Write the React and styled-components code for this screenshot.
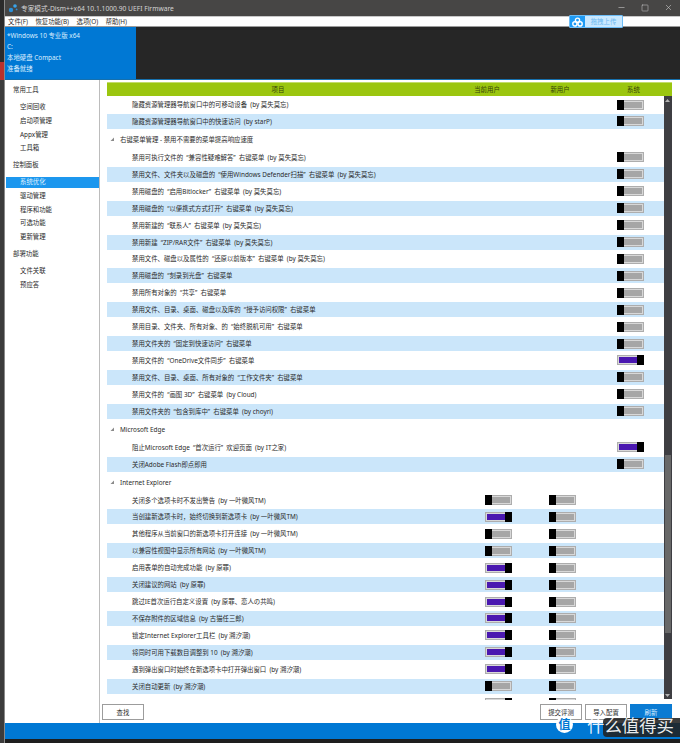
import React from 'react'
import styled, { createGlobalStyle } from 'styled-components'
import { Minus, Square, X } from 'lucide-react'

const GlobalStyle = createGlobalStyle`
  html, body {
    margin: 0;
    padding: 0;
    background: #1e1e1e;
  }
  * {
    box-sizing: border-box;
  }
`

const Page = styled.div`
  position: relative;
  display: flex;
  width: 680px;
  height: 743px;
  overflow: hidden;
  font-family: "Noto Sans", "Noto Sans CJK SC", sans-serif;
  font-size: 6.4px;
  color: #2a2a2a;
`

const Strip = styled.div`
  width: 4px;
  background: linear-gradient(#2b2b2b 0 62px, #b8312c 62px 80px, #3c3c3c 80px);
`

const Window = styled.div`
  flex: 1;
  display: flex;
  flex-direction: column;
  min-width: 0;
  border-left: 1px solid #8a8a8a;
`

const TitleBar = styled.div`
  height: 17px;
  display: flex;
  align-items: center;
  gap: 3px;
  padding: 0 7px 1px 3px;
  background: #474645;
  border-bottom: 1px solid #c8c8c8;
  color: #d4d4d4;
  font-size: 6.7px;
`

const TitleText = styled.span`
  flex: 1;
`

const WindowControls = styled.div`
  display: flex;
  align-items: center;
  gap: 15px;
  color: #d0d0d0;
`

const MenuBar = styled.div`
  height: 10px;
  display: flex;
  align-items: center;
  gap: 7.5px;
  padding-left: 3px;
  background: #fff;
  border-bottom: 1px solid #9a9a9a;
  line-height: 9px;
`

const TopPanel = styled.div`
  height: 53px;
  display: flex;
  background: #262626;
  border-bottom: 1px solid #1670ad;
`

const InfoBox = styled.div`
  width: 131px;
  padding: 2.5px 2px;
  background: #0078d4;
  color: #dbeeff;
  line-height: 11px;
`

const Body = styled.div`
  flex: 1;
  display: flex;
  min-height: 0;
  background: #fff;
`

const Sidebar = styled.div`
  width: 95px;
  border-right: 1px solid #bcbcbc;
`

const GroupTitle = styled.div`
  height: 13.7px;
  margin: 3.3px 0;
  padding-left: 8px;
  line-height: 13.7px;
`

const NavItem = styled.div`
  height: 13.7px;
  margin-left: 1px;
  padding-left: 14px;
  line-height: 13.7px;
  background: ${p => (p.$active ? 'linear-gradient(transparent 1.5px, #1c97ee 1.5px 12.5px, transparent 12.5px)' : 'none')};
  color: ${p => (p.$active ? '#dff1ff' : 'inherit')};
`

const Main = styled.div`
  flex: 1;
  display: flex;
  flex-direction: column;
  min-width: 0;
  padding: 2px 8px 0 7px;
`

const HeaderBar = styled.div`
  height: 14px;
  display: grid;
  grid-template-columns: 342px 76px 70px 1fr;
  align-items: center;
  text-align: center;
  background: #9bc60f;
  border-top: 1px solid #c3dc6c;
  color: #35420a;
`

const Content = styled.div`
  height: 604px;
  display: flex;
`

const List = styled.div`
  flex: 1;
  min-width: 0;
  padding-top: 1.07px;
  overflow: hidden;
`

const SectionRow = styled.div`
  height: 17px;
  margin-bottom: 2px;
  display: flex;
  align-items: center;
  gap: 6px;
  padding-left: 3px;
`

const Row = styled.div`
  height: 15px;
  margin-bottom: 1.93px;
  display: grid;
  grid-template-columns: 378px 64px 68px 1fr;
  align-items: center;
  background: ${p => (p.$shaded ? '#cbe6fa' : '#fff')};
`

const RowName = styled.div`
  padding-left: 25px;
  white-space: nowrap;
`

const ToggleBox = styled.div`
  width: 27px;
  height: 10px;
  display: flex;
  justify-content: ${p => (p.$on ? 'flex-end' : 'flex-start')};
  background: ${p => (p.$on ? '#4a18b0' : '#a6a6a6')};
  border: 1px solid #adadad;
  box-shadow: inset 0 0 0 1px #d8d8d8;
`

const Knob = styled.div`
  width: 7px;
  height: 10px;
  margin: -1px;
  background: #000;
`

const Scrollbar = styled.div`
  width: 8.3px;
  height: 603px;
  display: flex;
  flex-direction: column;
  align-items: center;
  background: #3e3e42;
`

const ScrollArrow = styled.div`
  height: 8px;
  display: flex;
  align-items: center;
  justify-content: center;
  margin-top: ${p => (p.$down ? 'auto' : '0')};
`

const ScrollThumb = styled.div`
  width: 6px;
  height: 178px;
  margin-top: 351px;
  background: #686868;
`

const Actions = styled.div`
  display: flex;
  gap: 3px;
  padding: 4px 0 0 0;
  margin-left: -5px;
`

const Button = styled.div`
  width: 42px;
  height: 16px;
  display: flex;
  align-items: center;
  justify-content: center;
  margin-left: ${p => (p.$push ? 'auto' : '0')};
  border: 1px solid ${p => (p.$primary ? '#0a7bd3' : '#9c9c9c')};
  background: ${p => (p.$primary ? '#0a7bd3' : '#fff')};
  color: ${p => (p.$primary ? '#d8edff' : '#2a2a2a')};
`

const StatusBar = styled.div`
  height: 16px;
  background: #0078d4;
`

const BottomEdge = styled.div`
  height: 4px;
  background: #1e1e1e;
`

const UploadBadge = styled.div`
  position: absolute;
  top: 15px;
  left: 569px;
  width: 54px;
  height: 13px;
  display: flex;
  border: 1px solid #6dbdf7;
  border-radius: 1px;
  background: #c9e8ff;
  color: #6db8f0;
`

const UploadIcon = styled.div`
  width: 15px;
  display: flex;
  align-items: center;
  justify-content: center;
  background: #1e9bf5;
`

const UploadLabel = styled.div`
  flex: 1;
  display: flex;
  align-items: center;
  justify-content: center;
`

const WatermarkPlate = styled.div`
  position: absolute;
  left: 603px;
  top: 718px;
  width: 77px;
  height: 19px;
  border-radius: 4px 0 0 4px;
  background: rgba(32, 32, 32, 0.88);
`

const WatermarkCircle = styled.div`
  position: absolute;
  left: 556px;
  top: 716px;
  width: 17px;
  height: 17px;
  border-radius: 50%;
  display: flex;
  align-items: center;
  justify-content: center;
  background: #fff;
  color: #0078d4;
  font-size: 12px;
  line-height: 17px;
  font-weight: 700;
`

const WatermarkText = styled.div`
  position: absolute;
  left: 587px;
  top: 718px;
  height: 15px;
  font-size: 17.4px;
  line-height: 15px;
  color: rgba(255, 255, 255, 0.92);
  white-space: nowrap;
`

const AppIcon = () => (
  <svg width="10" height="10" viewBox="0 0 10 10">
    <circle cx="3" cy="7" r="2.2" fill="#2a8fd8" />
    <circle cx="7" cy="3" r="1.8" fill="#3aa4ea" />
    <circle cx="8.6" cy="6.4" r="0.9" fill="#2a8fd8" />
  </svg>
)

const CloudIcon = () => (
  <svg width="11" height="10" viewBox="0 0 11 10" fill="none" stroke="#fff" strokeWidth="1.4">
    <circle cx="5.5" cy="3.2" r="2.1" />
    <circle cx="2.9" cy="6.9" r="2.1" />
    <circle cx="8.1" cy="6.9" r="2.1" />
  </svg>
)

const Collapse = () => (
  <svg width="4" height="4" viewBox="0 0 4 4">
    <path d="M4 0.5V4H0.5Z" fill="#8a8a8a" />
  </svg>
)

const Arrow = ({ down }) => (
  <svg width="5" height="3" viewBox="0 0 5 3">
    <path d={down ? 'M0 0H5L2.5 3Z' : 'M0 3H5L2.5 0Z'} fill="#b4b4b4" />
  </svg>
)

const Toggle = ({ on }) => (
  <ToggleBox $on={on}>
    <Knob />
  </ToggleBox>
)

const nav = [
  { title: '常用工具', items: ['空间回收', '启动项管理', 'Appx管理', '工具箱'] },
  { title: '控制面板', items: ['系统优化', '驱动管理', '程序和功能', '可选功能', '更新管理'] },
  { title: '部署功能', items: ['文件关联', '预应答'] },
]

// [name, current user, new user, system]; undefined means the switch is not shown
const sections = [
  {
    rows: [
      ['隐藏资源管理器导航窗口中的可移动设备 (by 莫失莫忘)', , , 0],
      ['隐藏资源管理器导航窗口中的快速访问 (by starP)', , , 0],
    ],
  },
  {
    title: '右键菜单管理 - 禁用不需要的菜单提高响应速度',
    rows: [
      ['禁用可执行文件的 “兼容性疑难解答” 右键菜单 (by 莫失莫忘)', , , 0],
      ['禁用文件、文件夹以及磁盘的 “使用Windows Defender扫描” 右键菜单 (by 莫失莫忘)', , , 0],
      ['禁用磁盘的 “启用Bitlocker” 右键菜单 (by 莫失莫忘)', , , 0],
      ['禁用磁盘的 “以便携式方式打开” 右键菜单 (by 莫失莫忘)', , , 0],
      ['禁用新建的 “联系人” 右键菜单 (by 莫失莫忘)', , , 0],
      ['禁用新建 “ZIP/RAR文件” 右键菜单 (by 莫失莫忘)', , , 0],
      ['禁用文件、磁盘以及属性的 “还原以前版本” 右键菜单 (by 莫失莫忘)', , , 0],
      ['禁用磁盘的 “刻录到光盘” 右键菜单', , , 0],
      ['禁用所有对象的 “共享” 右键菜单', , , 0],
      ['禁用文件、目录、桌面、磁盘以及库的 “授予访问权限” 右键菜单', , , 0],
      ['禁用目录、文件夹、所有对象、的 “始终脱机可用” 右键菜单', , , 0],
      ['禁用文件夹的 “固定到快速访问” 右键菜单', , , 0],
      ['禁用文件的 “OneDrive文件同步” 右键菜单', , , 1],
      ['禁用文件、目录、桌面、所有对象的 “工作文件夹” 右键菜单', , , 0],
      ['禁用文件的 “画图 3D” 右键菜单 (by Cloud)', , , 0],
      ['禁用文件夹的 “包含到库中” 右键菜单 (by choyri)', , , 0],
    ],
  },
  {
    title: 'Microsoft Edge',
    rows: [
      ['阻止Microsoft Edge “首次运行” 欢迎页面 (by IT之家)', , , 1],
      ['关闭Adobe Flash即点即用', , , 0],
    ],
  },
  {
    title: 'Internet Explorer',
    rows: [
      ['关闭多个选项卡时不发出警告 (by 一叶微风TM)', 0, 0],
      ['当创建新选项卡时,始终切换到新选项卡 (by 一叶微风TM)', 1, 0],
      ['其他程序从当前窗口的新选项卡打开连接 (by 一叶微风TM)', 0, 0],
      ['以兼容性视图中显示所有网站 (by 一叶微风TM)', 0, 0],
      ['启用表单的自动完成功能 (by 原罪)', 1, 0],
      ['关闭建议的网站 (by 原罪)', 1, 0],
      ['跳过IE首次运行自定义设置 (by 原罪、恋人の共鸣)', 1, 0],
      ['不保存附件的区域信息 (by 古猫任三郎)', 1, 0],
      ['锁定Internet Explorer工具栏 (by 溯汐潮)', 1, 0],
      ['将同时可用下载数目调整到 10 (by 溯汐潮)', 1, 0],
      ['遇到弹出窗口时始终在新选项卡中打开弹出窗口 (by 溯汐潮)', 1, 0],
      ['关闭自动更新 (by 溯汐潮)', 0, 0],
      ['', 1, 0],
    ],
  },
]

// the gaps round the quotes and the author are wider than a plain space: an en space
const widenGaps = name => name
  .replace(/ (?=[“(])/g, '\u2002')
  .replace(/” /g, '”\u2002')
  .replace('时,', '时\uff0c')

const Switch = ({ value }) => (
  <div>{value === undefined ? null : <Toggle on={value === 1} />}</div>
)

export default function App() {
  return (
    <Page>
      <GlobalStyle />
      <Strip />
      <Window>
        <TitleBar>
          <AppIcon />
          <TitleText>专家模式-Dism++x64 10.1.1000.90 UEFI Firmware</TitleText>
          <WindowControls>
            <Minus size={9} strokeWidth={1.5} />
            <Square size={8} strokeWidth={1.5} />
            <X size={9} strokeWidth={1.5} />
          </WindowControls>
        </TitleBar>
        <MenuBar>
          <span>文件(F)</span>
          <span>恢复功能(B)</span>
          <span>选项(O)</span>
          <span>帮助(H)</span>
        </MenuBar>
        <TopPanel>
          <InfoBox>
            <div>*Windows 10 专业版 x64</div>
            <div>C:</div>
            <div>本地硬盘 Compact</div>
            <div>准备就绪</div>
          </InfoBox>
        </TopPanel>
        <Body>
          <Sidebar>
            {nav.map(group => (
              <div key={group.title}>
                <GroupTitle>{group.title}</GroupTitle>
                {group.items.map(item => (
                  <NavItem key={item} $active={item === '系统优化'}>{item}</NavItem>
                ))}
              </div>
            ))}
          </Sidebar>
          <Main>
            <HeaderBar>
              <span>项目</span>
              <span>当前用户</span>
              <span>新用户</span>
              <span>系统</span>
            </HeaderBar>
            <Content>
              <List>
                {sections.map((section, s) => (
                  <div key={s}>
                    {section.title && (
                      <SectionRow>
                        <Collapse />
                        <span>{section.title}</span>
                      </SectionRow>
                    )}
                    {section.rows.map((row, i) => (
                      <Row key={i} $shaded={i % 2 === 1}>
                        <RowName>{widenGaps(row[0])}</RowName>
                        <Switch value={row[1]} />
                        <Switch value={row[2]} />
                        <Switch value={row[3]} />
                      </Row>
                    ))}
                  </div>
                ))}
              </List>
              <Scrollbar>
                <ScrollArrow><Arrow /></ScrollArrow>
                <ScrollThumb />
                <ScrollArrow $down><Arrow down /></ScrollArrow>
              </Scrollbar>
            </Content>
            <Actions>
              <Button>查找</Button>
              <Button $push>提交评测</Button>
              <Button>导入配置</Button>
              <Button $primary>刷新</Button>
            </Actions>
          </Main>
        </Body>
        <StatusBar />
        <BottomEdge />
      </Window>
      <UploadBadge>
        <UploadIcon><CloudIcon /></UploadIcon>
        <UploadLabel>拖拽上传</UploadLabel>
      </UploadBadge>
      <WatermarkPlate />
      <WatermarkCircle>值</WatermarkCircle>
      <WatermarkText>什么值得买</WatermarkText>
    </Page>
  )
}
